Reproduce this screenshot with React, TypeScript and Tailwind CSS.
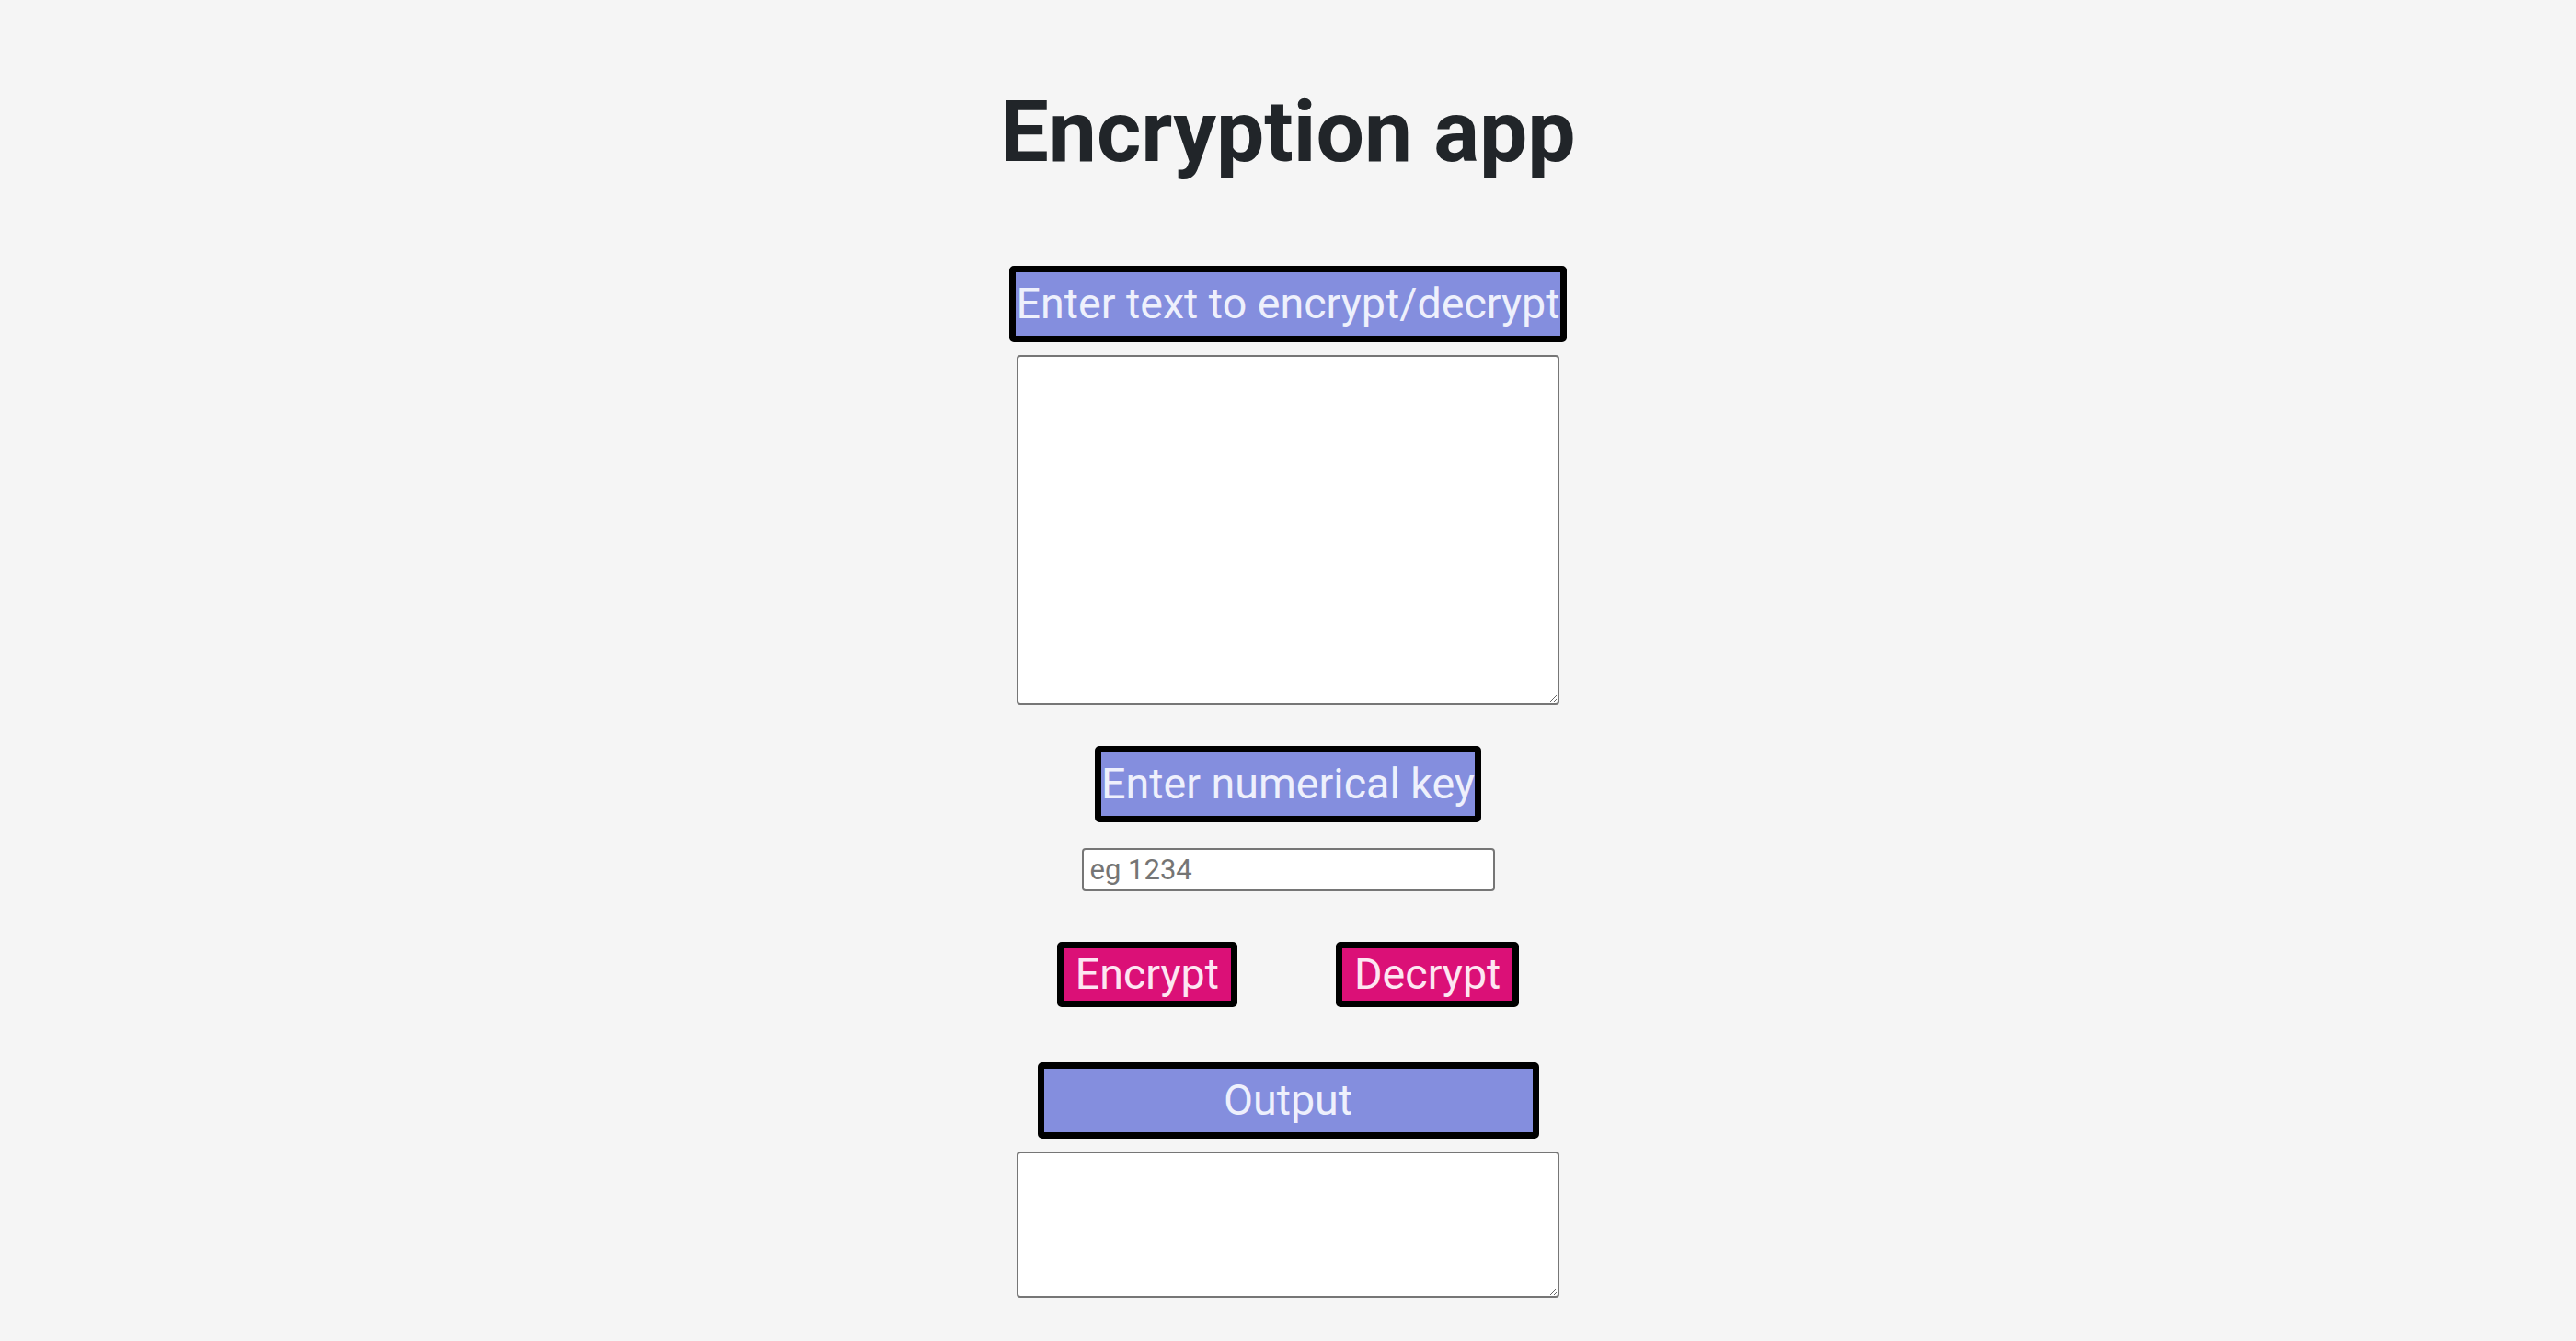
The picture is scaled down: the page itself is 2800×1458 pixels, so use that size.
import React from "react";

export default function App() {
  return (
    <div className="min-h-screen w-full bg-[#f5f5f5] flex flex-col items-center font-['Roboto',_'Liberation_Sans',_sans-serif]">
      <h1 className="mt-[88px] text-[93px] leading-[1.2] font-bold text-[#212529]">
        Encryption app
      </h1>

      <label
        htmlFor="inputText"
        className="mt-[89px] block border-[7px] border-black rounded-[5px] bg-[#848ede] text-[#eef0fc] text-[46.6px] leading-[69px] whitespace-nowrap"
      >
        Enter text to encrypt/decrypt
      </label>
      <textarea
        id="inputText"
        className="mt-[14px] block w-[590px] h-[380px] bg-white border-2 border-[#767676] rounded-[4px] p-[3px] text-[16px]"
      />

      <label
        htmlFor="key"
        className="mt-[45px] block border-[7px] border-black rounded-[5px] bg-[#848ede] text-[#eef0fc] text-[46.6px] leading-[69px] whitespace-nowrap"
      >
        Enter numerical key
      </label>
      <input
        id="key"
        type="text"
        placeholder="eg 1234"
        className="mt-[28px] block w-[449px] h-[47px] bg-white border-2 border-[#767676] rounded-[4px] px-[7px] text-[31px] placeholder:text-[#757575]"
      />

      <div className="mt-[55px] flex flex-row gap-[107px]">
        <button className="h-[71px] flex items-center border-[7px] border-black rounded-[5px] bg-[#db1077] text-[#fde6f2] text-[46.6px] leading-[54px] px-[13px] whitespace-nowrap">
          Encrypt
        </button>
        <button className="h-[71px] flex items-center border-[7px] border-black rounded-[5px] bg-[#db1077] text-[#fde6f2] text-[46.6px] leading-[54px] px-[13px] whitespace-nowrap">
          Decrypt
        </button>
      </div>

      <label
        htmlFor="output"
        className="mt-[60px] block w-[545px] text-center border-[7px] border-black rounded-[5px] bg-[#848ede] text-[#eef0fc] text-[46.6px] leading-[69px] whitespace-nowrap"
      >
        Output
      </label>
      <textarea
        id="output"
        className="mt-[14px] block w-[590px] h-[159px] bg-white border-2 border-[#767676] rounded-[4px] p-[3px] text-[16px]"
      />
    </div>
  );
}
